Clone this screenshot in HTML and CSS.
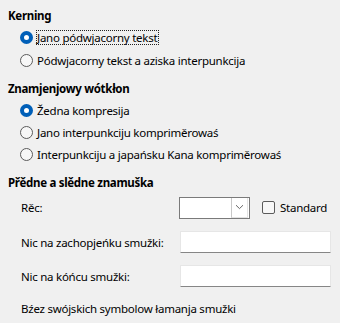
FILE: index.html
```html
<!DOCTYPE html>
<html lang="hsb">
<head>
<meta charset="utf-8">
<title>Azijske wuhotowanje</title>
<link rel="stylesheet" href="styles.css">
</head>
<body>
<div class="page">
  <section class="group">
    <h2 class="heading">Kerning</h2>
    <div class="options opts-kern">
      <label class="radio-row"><span class="radio checked"></span><span class="label focus">Jano pódwjacorny tekst</span></label>
      <label class="radio-row"><span class="radio"></span><span class="label">Pódwjacorny tekst a aziska interpunkcija</span></label>
    </div>
  </section>
  <section class="group group-comp">
    <h2 class="heading">Znamjenjowy wótkłon</h2>
    <div class="options opts-comp">
      <label class="radio-row"><span class="radio checked"></span><span class="label">Žedna kompresija</span></label>
      <label class="radio-row"><span class="radio"></span><span class="label">Jano interpunkciju kompriměrowaś</span></label>
      <label class="radio-row"><span class="radio"></span><span class="label">Interpunkciju a japańsku Kana kompriměrowaś</span></label>
    </div>
  </section>
  <section class="group group-chars">
    <h2 class="heading">Přědne a slědne znamuška</h2>
    <div class="form">
      <div class="form-row row-lang">
        <span class="flabel flabel-lang">Rěc:</span>
        <div class="combo"><span class="combo-btn"><svg width="9" height="6" viewBox="0 0 9 6"><path d="M1 1.2 L4.5 4.6 L8 1.2" fill="none" stroke="#555" stroke-width="0.9"/></svg></span></div>
        <label class="check"><span class="box"></span><span class="label">Standard</span></label>
      </div>
      <div class="form-row row-input row-first">
        <span class="flabel">Nic na zachopjeńku smužki:</span>
        <span class="input"></span>
      </div>
      <div class="form-row row-input">
        <span class="flabel">Nic na kóńcu smužki:</span>
        <span class="input"></span>
      </div>
      <p class="note">Bźez swójskich symbolow łamanja smužki</p>
    </div>
  </section>
</div>
</body>
</html>
```
FILE: styles.css
```css
html, body {
  margin: 0;
  padding: 0;
  background: #f0f0f0;
}
body {
  font-family: "Noto Sans", "Open Sans", sans-serif;
  font-size: 11.5px;
  letter-spacing: -0.25px;
  line-height: 16px;
  color: #000;
}
.page {
  padding: 8px 9px 0 8px;
}
.heading {
  margin: 0;
  font-size: 11.5px;
  font-weight: 700;
  letter-spacing: -0.3px;
  line-height: 16px;
  height: 16px;
}
.group-comp {
  margin-top: 8px;
}
.group-chars {
  margin-top: 9px;
}
.options {
  display: flex;
  flex-direction: column;
  padding-left: 12px;
}
.opts-kern {
  margin-top: 1.5px;
}
.opts-kern .radio-row {
  height: 23.5px;
}
.opts-comp {
  margin-top: 3px;
}
.opts-comp .radio-row {
  height: 22px;
}
.radio-row {
  display: flex;
  align-items: center;
  gap: 4px;
}
.radio {
  box-sizing: border-box;
  width: 13px;
  height: 13px;
  border-radius: 50%;
  border: 1px solid #5b5b5b;
  background: #f7f7f7;
  flex: none;
}
.radio.checked {
  border: 4px solid #005fb8;
  background: #fff;
}
.label {
  white-space: nowrap;
}
.focus {
  outline: 1px dotted #222;
  outline-offset: 0;
  line-height: 13px;
  padding: 0 1px 0 0;
}
.form {
  margin-top: 6px;
  padding-left: 13px;
}
.form-row {
  display: grid;
  grid-template-columns: 158px auto auto;
  justify-content: start;
  align-items: center;
  height: 22px;
}
.row-first {
  margin-top: 12.5px;
}
.row-input + .row-input {
  margin-top: 12px;
}
.flabel {
  white-space: nowrap;
  padding-top: 2px;
}
.flabel-lang {
  padding-top: 0;
}
.combo {
  box-sizing: border-box;
  width: 71px;
  height: 22px;
  border: 1px solid #7a7a7a;
  background: #fff;
  display: flex;
  justify-content: flex-end;
  padding: 0 1px 0 0;
}
.combo-btn {
  box-sizing: border-box;
  width: 17px;
  height: 20px;
  border-left: 1px solid #c8c8c8;
  border-right: 1px solid #e3e3e3;
  border-bottom: 1px solid #e3e3e3;
  background: #fff;
  display: flex;
  align-items: center;
  justify-content: center;
}
.check {
  display: flex;
  align-items: center;
  gap: 5px;
  margin-left: 12px;
}
.box {
  box-sizing: border-box;
  width: 13px;
  height: 13px;
  border: 1px solid #5b5b5b;
  border-radius: 2px;
  background: #f7f7f7;
}
.input {
  box-sizing: border-box;
  display: block;
  width: 151px;
  height: 22px;
  margin-left: 1px;
  background: #fff;
  border: 1px solid #e6e6e6;
  border-bottom: 1px solid #868686;
  border-radius: 1px;
}
.note {
  margin: 14px 0 0 0;
  white-space: nowrap;
}
```
